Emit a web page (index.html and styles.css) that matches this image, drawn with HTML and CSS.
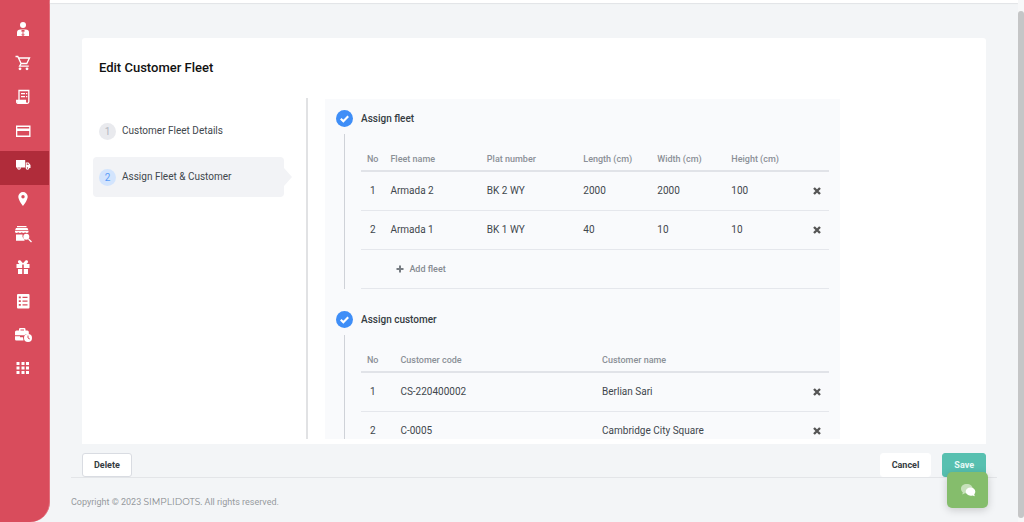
FILE: index.html
```html
<!DOCTYPE html>
<html lang="en">
<head>
<meta charset="utf-8">
<meta name="viewport" content="width=device-width, initial-scale=1">
<title>Edit Customer Fleet</title>
<link rel="stylesheet" href="styles.css">
</head>
<body>
<div class="app">
  <nav class="sidebar" aria-label="Main">
    <a href="#" aria-label="Users"><svg viewBox="0 0 16 16"><circle cx="8" cy="4" r="3"/><path d="M2 15v-3.500Q2 8.500 5.500 8.500h5Q14 8.500 14 11.500V15z"/><path class="cut" d="M6.500 9h3v1.500l-.8 1 .8 2.500-1.500 1-1.500-1 .8-2.500-.8-1z"/><path d="M7.500 10.500h1v3h-1z"/></svg></a>
    <a href="#" aria-label="Sales"><svg viewBox="0 0 16 16"><path class="line" d="M.5 1.500h2.300l3.300 7h5.700l2.700-5.500H4M6.100 8.500l-1.500 2.700h9.200"/><circle cx="5" cy="13.800" r="1.400"/><circle cx="12" cy="13.800" r="1.400"/></svg></a>
    <a href="#" aria-label="Invoices"><svg viewBox="0 0 16 16"><path class="line" d="M4 11V1.500h9.800v11.300q0 1.500-1.500 1.500H3q-1.300 0-1.300-1.500V11.500h8.700v1.500q0 1.300 1.300 1.300"/><path d="M2 12h8.500l1 2.500H2.500zM6 4h4v1.200H6zM11 4h1.300v1.200H11zM6 7h4v1.200H6zM11 7h1.300v1.200H11z"/></svg></a>
    <a href="#" aria-label="Payments"><svg viewBox="0 0 16 16"><path fill-rule="evenodd" d="M1 2.500h14.500v11.500H1zM2.300 4v1.500h11.900V4zM2.300 8v4.600h11.900V8z"/></svg></a>
    <a href="#" class="active" aria-label="Fleet" aria-current="page"><svg viewBox="0 0 16 16"><path d="M1 3h9.200v7.500H1zM10.800 5.500h2.700l2 2.500v3h-4.700z"/><circle cx="4" cy="11" r="1.800"/><circle cx="12.500" cy="11" r="1.800"/><path class="cut" d="M11.700 6.500H13l1 1.300h-2.300z"/><circle class="cut" cx="4" cy="11" r=".7"/><circle class="cut" cx="12.500" cy="11" r=".7"/></svg></a>
    <a href="#" aria-label="Locations"><svg viewBox="0 0 16 16"><path fill-rule="evenodd" d="M8 1a4.700 4.700 0 0 0-4.700 4.700C3.300 9 8 15 8 15s4.700-6 4.700-9.300A4.700 4.700 0 0 0 8 1zm0 3a1.700 1.700 0 1 1 0 3.400A1.700 1.700 0 0 1 8 4z"/></svg></a>
    <a href="#" aria-label="Stores"><svg class="wide" viewBox="0 0 18 18"><path d="M3 1h9.500v1.200H3zM2 3h11.500l.8 2H1.200zM1 5.800h13.500v1.500q-1.700 1.300-3.400 0-1.700 1.300-3.400 0-1.700 1.300-3.400 0-1.700 1.300-3.300 0zM2 9.500h6.500V12l2 2.500v1.200H2z"/><circle cx="12.300" cy="11.800" r="3"/><path class="line" d="m14.500 14 3 3"/></svg></a>
    <a href="#" aria-label="Promotions"><svg viewBox="0 0 16 16"><path fill-rule="evenodd" d="M1.500 5h3C1.500 3 3.500.5 5.500 1.500L8 4.200l2.500-2.700c2-1 4 1.500 1 3.500h3v4H8.800V5.500H7.200V9H1.500zM3 10h4.200v5H3zM8.800 10H13v5H8.800z"/></svg></a>
    <a href="#" aria-label="Reports"><svg viewBox="0 0 16 16"><rect x="2" y="1" width="12.500" height="14.500" rx="1"/><path class="cut" d="M3.800 3.500h2v1.800h-2zM3.800 7.300h2v1.800h-2zM3.800 11h2v1.800h-2zM7.500 3.800h5v1.200h-5zM7.500 7.500h5v1.200h-5zM7.500 11.300h5v1.200h-5z"/></svg></a>
    <a href="#" aria-label="Work schedule"><svg class="wide" viewBox="0 0 18 18"><path fill-rule="evenodd" d="M5 3.500V2.300Q5 1 6.300 1h3.900q1.300 0 1.300 1.300v1.200h1.800q1.500 0 1.500 1.500v2.300h-3l-1.500 1H1V5q0-1.500 1.500-1.500zM6.500 2.500v1h3.500v-1zM1 9.300h5v1h3L9.500 13.500H2.300Q1 13.500 1 12.300z"/><circle cx="14" cy="11" r="4"/><path class="stroke-cut" d="M14 8.500V11l1.800 1"/></svg></a>
    <a href="#" aria-label="All apps"><svg viewBox="0 0 16 16"><path d="M1.500 1h3v3h-3zM6.500 1h3v3h-3zM11 1h3v3h-3zM1.500 5.500h3v3h-3zM6.500 5.500h3v3h-3zM11 5.500h3v3h-3zM1.500 10h3v3h-3zM6.500 10h3v3h-3zM11 10h3v3h-3z"/></svg></a>
  </nav>

  <div class="page">
    <header class="topbar"></header>
    <main class="main">
      <section class="card">
        <h1>Edit Customer Fleet</h1>
        <div class="wizard">
          <ol class="steps">
            <li><a href="#"><span class="num">1</span>Customer Fleet Details</a></li>
            <li class="current"><a href="#" aria-current="step"><span class="num">2</span>Assign Fleet &amp; Customer</a></li>
          </ol>
          <div class="panel">
            <section class="block">
              <div class="rail"><span class="check"><svg viewBox="0 0 16 16"><path d="m4.500 8.200 2.400 2.300 4.600-4.600"/></svg></span></div>
              <div class="body">
                <h2>Assign fleet</h2>
                <table class="fleet">
                  <thead><tr><th class="no">No</th><th class="name">Fleet name</th><th class="name">Plat number</th><th class="size">Length (cm)</th><th class="size">Width (cm)</th><th class="size">Height (cm)</th><th class="act"></th></tr></thead>
                  <tbody>
                    <tr><td class="no">1</td><td>Armada 2</td><td>BK 2 WY</td><td>2000</td><td>2000</td><td>100</td><td class="act"><button class="remove" type="button" aria-label="Remove Armada 2"><svg viewBox="0 0 8 8"><path d="m1 1 6 6M7 1 1 7"/></svg></button></td></tr>
                    <tr><td class="no">2</td><td>Armada 1</td><td>BK 1 WY</td><td>40</td><td>10</td><td>10</td><td class="act"><button class="remove" type="button" aria-label="Remove Armada 1"><svg viewBox="0 0 8 8"><path d="m1 1 6 6M7 1 1 7"/></svg></button></td></tr>
                    <tr><td></td><td colspan="6"><button class="add" type="button"><svg viewBox="0 0 8 8"><path d="M4 .5v7M.5 4h7"/></svg>Add fleet</button></td></tr>
                  </tbody>
                </table>
              </div>
            </section>
            <section class="block">
              <div class="rail"><span class="check"><svg viewBox="0 0 16 16"><path d="m4.500 8.200 2.400 2.300 4.600-4.600"/></svg></span></div>
              <div class="body">
                <h2>Assign customer</h2>
                <table class="customers">
                  <thead><tr><th class="no">No</th><th class="code">Customer code</th><th class="customer">Customer name</th><th class="act"></th></tr></thead>
                  <tbody>
                    <tr><td class="no">1</td><td class="code">CS-220400002</td><td>Berlian Sari</td><td class="act"><button class="remove" type="button" aria-label="Remove Berlian Sari"><svg viewBox="0 0 8 8"><path d="m1 1 6 6M7 1 1 7"/></svg></button></td></tr>
                    <tr><td class="no">2</td><td class="code">C-0005</td><td>Cambridge City Square</td><td class="act"><button class="remove" type="button" aria-label="Remove Cambridge City Square"><svg viewBox="0 0 8 8"><path d="m1 1 6 6M7 1 1 7"/></svg></button></td></tr>
                  </tbody>
                </table>
              </div>
            </section>
          </div>
        </div>
      </section>
      <div class="actions">
        <button class="btn delete" type="button">Delete</button>
        <button class="btn cancel" type="button">Cancel</button>
        <button class="btn save" type="button">Save</button>
      </div>
    </main>
    <footer class="footer">Copyright © 2023 <span class="brand">SIMPLIDOTS.</span> All rights reserved.</footer>
  </div>
  <div class="scrollbar"><div class="thumb"></div></div>
</div>
<button class="chat" type="button" aria-label="Open chat"><svg viewBox="0 0 16 14"><path class="back" d="M6.800 1C3.400 1 1 3 1 5.700c0 1.600.7 2.700 1.800 3.600L2.300 11.500 5 10.200c5 .8 7.600-1.600 7.600-4.500C12.600 3 10.200 1 6.800 1z"/><path d="M10.500 4.500c2.800 0 4.800 1.800 4.800 4.100 0 1.200-.4 2-1.100 2.700l.6 2-2.300-.8c-4.100.8-6.800-1.300-6.800-3.900 0-2.300 2-4.100 4.800-4.100z"/></svg></button>
</body>
</html>
```
FILE: styles.css
```css
* { box-sizing: border-box; }

body {
  margin: 0;
  font-family: Roboto, "Liberation Sans", sans-serif;
  font-size: 10px;
  line-height: 14px;
  color: #3f474d;
  background: #f3f5f7;
}

button { font: inherit; cursor: pointer; }
a { color: inherit; text-decoration: none; }

.app { display: flex; height: 100vh; overflow: hidden; }

/* Sidebar */
.sidebar {
  flex: none;
  width: 50px;
  padding-top: 15px;
  background: #d94c5c;
  border-right: 1px solid #e2707d;
  border-bottom-right-radius: 20px;
  --bg: #d94c5c;
}
.sidebar a {
  display: flex;
  justify-content: center;
  height: 34px;
  padding: 6px 4px 0 0;
}
.sidebar .active { background: #b02c3a; --bg: #b02c3a; }
.sidebar svg { width: 16px; height: 16px; fill: #fff; }
.sidebar .wide { width: 18px; height: 18px; }
.sidebar .cut { fill: var(--bg); }
.sidebar .line { fill: none; stroke: #fff; stroke-width: 1.3; }
.sidebar .stroke-cut { fill: none; stroke: var(--bg); stroke-width: 1; }

/* Page */
.page { flex: 1; min-width: 0; display: flex; flex-direction: column; }
.topbar {
  flex: none;
  height: 3px;
  background: #fff;
  box-shadow: 0 1px 1px #e2e4e6;
}
.main {
  flex: 1;
  min-height: 0;
  display: flex;
  flex-direction: column;
  margin: 0 21px;
  padding: 35px 11px 0;
  border-bottom: 1px solid #e3e5e8;
}
.card {
  flex: 1;
  min-height: 0;
  display: flex;
  flex-direction: column;
  padding-bottom: 5px;
  background: #fff;
  border-radius: 3px 3px 0 0;
}
h1 {
  margin: 0;
  padding: 20px 17px;
  font-size: 13px;
  line-height: 20px;
  font-weight: 500;
  color: #111;
}
.wizard { flex: 1; min-height: 0; display: flex; }

.steps {
  flex: none;
  width: 25%;
  margin: 0;
  padding: 13px 22px 0 11px;
  list-style: none;
  border-right: 2px solid #e1e2e4;
}
.steps li { margin-bottom: 6px; border-radius: 4px; }
.steps a { display: flex; align-items: center; gap: 6px; height: 40px; padding: 0 6px; }
.num {
  width: 17px;
  height: 17px;
  border-radius: 50%;
  line-height: 17px;
  text-align: center;
  color: #b3b6bf;
  background: #e9eaee;
}
.steps .current { position: relative; background: #f2f3f6; }
.steps .current::after {
  content: "";
  position: absolute;
  left: 100%;
  top: 11px;
  border: 9px solid transparent;
  border-left: 8px solid #f2f3f6;
  border-right: 0;
}
.current .num { color: #5a9cf8; background: #d3e4fd; }

.panel {
  width: 57%;
  margin: 1px 0 0 17px;
  padding: 11px 11px 0;
  overflow: hidden;
  background: #f9fafc;
}
.block { display: flex; gap: 8px; margin-bottom: 22px; }
.rail { flex: none; width: 17px; display: flex; flex-direction: column; align-items: center; gap: 7px; }
.rail::after { content: ""; flex: 1; width: 1px; background: #cfd2d8; }
.check { width: 17px; height: 17px; border-radius: 50%; background: #3f8ef7; }
.check svg { display: block; width: 17px; height: 17px; fill: none; stroke: #fff; stroke-width: 2; }
.body { flex: 1; min-width: 0; }
h2 { margin: 0 0 22px; font-size: 10px; line-height: 18px; font-weight: 500; color: #353c42; }

/* Tables */
table { width: 100%; table-layout: fixed; border-collapse: separate; border-spacing: 0; }
th, td { padding: 0 6px; text-align: left; }
th {
  height: 22px;
  padding-bottom: 2px;
  font-size: 9px;
  line-height: 14px;
  font-weight: 500;
  color: #8b9097;
  border-bottom: 2px solid #e1e3e8;
}
td { height: 39px; border-bottom: 1px solid #e5e7ec; }
.no { width: 5%; padding: 0; text-align: center; }
th.no { padding-bottom: 2px; }
.name { width: 20.6%; }
.size { width: 15.8%; }
.customer { width: 43%; }
.act { padding: 0 8px; }
.customers .code { width: 45.2%; padding-left: 16px; }
.remove { display: block; margin-left: auto; padding: 0; border: 0; background: none; }
.remove svg { display: block; width: 8px; height: 8px; stroke: #555; stroke-width: 2.4; }
.add {
  display: flex;
  align-items: center;
  gap: 5px;
  padding: 0 0 0 6px;
  border: 0;
  background: none;
  color: #868b91;
  font-size: 9px;
  font-weight: 500;
}
.add svg { width: 8px; height: 8px; stroke: #777c82; stroke-width: 2; }

/* Actions and footer */
.actions { flex: none; display: flex; gap: 11px; padding-top: 9px; }
.btn {
  height: 24px;
  padding: 0 11px;
  border: 1px solid #fff;
  border-radius: 3px;
  background: #fff;
  color: #353c42;
  font-size: 9px;
  font-weight: 700;
}
.btn.delete { margin-right: auto; border-color: #d9dce2; }
.btn.save { border-color: #57c0b0; background: #57c0b0; color: #e9faf7; }
.footer {
  flex: none;
  padding: 17px 21px 13px;
  font-size: 9px;
  color: #969a9e;
}
.brand { font-family: Montserrat, Lato, sans-serif; color: #85898d; }

.scrollbar { flex: none; width: 6px; padding: 11px 0 4px; background: #f7f8f9; }
.thumb { height: 100%; border-radius: 3px; background: #c5c6c7; }

.chat {
  position: fixed;
  right: 36px;
  bottom: 14px;
  width: 41px;
  height: 36px;
  padding: 0;
  border: 0;
  border-radius: 5px;
  background: #85bd6c;
  box-shadow: 0 2px 8px rgba(0, 0, 0, .18);
}
.chat svg { display: block; width: 16px; height: 14px; margin: auto; fill: #fff; }
.chat .back { fill: #c6e1ba; }
```
